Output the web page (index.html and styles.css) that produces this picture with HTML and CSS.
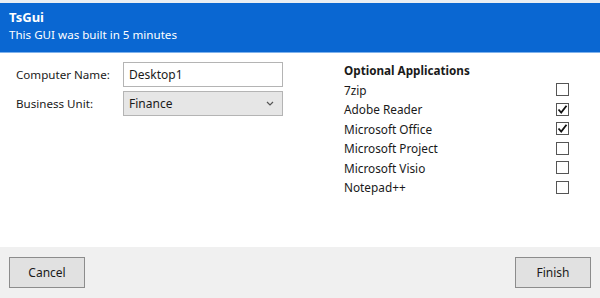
FILE: index.html
```html
<!DOCTYPE html>
<html>
<head>
<meta charset="utf-8">
<link rel="stylesheet" href="styles.css">
</head>
<body>
<div class="window">
  <header class="header">
    <div class="title">TsGui</div>
    <div class="subtitle">This GUI was built in 5 minutes</div>
  </header>
  <main class="content">
    <section class="left">
      <div class="row">
        <label class="label">Computer Name:</label>
        <div class="textbox">Desktop1</div>
      </div>
      <div class="row">
        <label class="label">Business Unit:</label>
        <div class="combo">
          <span>Finance</span>
          <svg class="chev" width="8" height="5" viewBox="0 0 8 5"><path d="M1 1 L4 4 L7 1" fill="none" stroke="#555" stroke-width="1.2"/></svg>
        </div>
      </div>
    </section>
    <section class="right">
      <div class="heading">Optional Applications</div>
      <div class="app"><span>7zip</span><span class="box"></span></div>
      <div class="app"><span>Adobe Reader</span><span class="box"><svg width="11" height="11" viewBox="0 0 11 11"><path d="M1.5 5.5 L4.2 8.5 L9.5 1.8" fill="none" stroke="#111" stroke-width="1.8"/></svg></span></div>
      <div class="app"><span>Microsoft Office</span><span class="box"><svg width="11" height="11" viewBox="0 0 11 11"><path d="M1.5 5.5 L4.2 8.5 L9.5 1.8" fill="none" stroke="#111" stroke-width="1.8"/></svg></span></div>
      <div class="app"><span>Microsoft Project</span><span class="box"></span></div>
      <div class="app"><span>Microsoft Visio</span><span class="box"></span></div>
      <div class="app"><span>Notepad++</span><span class="box"></span></div>
    </section>
  </main>
  <footer class="footer">
    <button class="btn">Cancel</button>
    <button class="btn">Finish</button>
  </footer>
</div>
</body>
</html>
```
FILE: styles.css
```css
html, body {
  margin: 0;
  padding: 0;
  background: #e9eef3;
}
body {
  font-family: "Noto Sans", "Open Sans", sans-serif;
  font-size: 12px;
  color: #1a1a1a;
}
.window {
  width: 600px;
  height: 295px;
  margin-top: 3px;
  background: #fff;
  display: flex;
  flex-direction: column;
}
.header {
  background: #0a67d2;
  color: #fff;
  height: 50px;
  padding: 6px 9px 0;
  box-sizing: border-box;
  border-bottom: 1px solid #7fb2ec;
}
.title {
  font-weight: bold;
  font-size: 13px;
  line-height: 17px;
}
.subtitle {
  font-size: 11.6px;
  line-height: 18px;
}
.content {
  flex: 1;
  display: flex;
  padding: 9px 0 0 16px;
}
.left {
  width: 267px;
  display: flex;
  flex-direction: column;
  gap: 4px;
}
.row {
  display: flex;
  align-items: center;
}
.label {
  width: 107px;
  font-size: 11.6px;
}
.textbox, .combo {
  width: 160px;
  height: 25px;
  box-sizing: border-box;
  border: 1px solid #b4b4b4;
  padding: 0 5px;
  display: flex;
  align-items: center;
  font-size: 12px;
}
.textbox { background: #fff; }
.combo {
  background: #e6e6e6;
  justify-content: space-between;
  padding-right: 8px;
}
.right {
  margin-left: 61px;
  width: 226px;
  display: flex;
  flex-direction: column;
}
.heading {
  font-weight: bold;
  font-size: 11.7px;
  line-height: 17px;
  margin-bottom: 1px;
}
.app {
  display: flex;
  justify-content: space-between;
  align-items: center;
  height: 19.5px;
  font-size: 11.8px;
}
.box {
  width: 13px;
  height: 13px;
  box-sizing: border-box;
  border: 1px solid #555;
  background: #fff;
  display: flex;
  align-items: center;
  justify-content: center;
  margin-right: 1px;
}
.footer {
  height: 51px;
  background: #f0f0f0;
  display: flex;
  justify-content: space-between;
  align-items: flex-start;
  padding: 10px 9px 0;
  box-sizing: border-box;
}
.btn {
  width: 76px;
  height: 31px;
  background: #e1e1e1;
  border: 1px solid #8c8c8c;
  font-family: "Noto Sans", "Open Sans", sans-serif;
  font-size: 12px;
  color: #1a1a1a;
  padding: 0;
}
```
